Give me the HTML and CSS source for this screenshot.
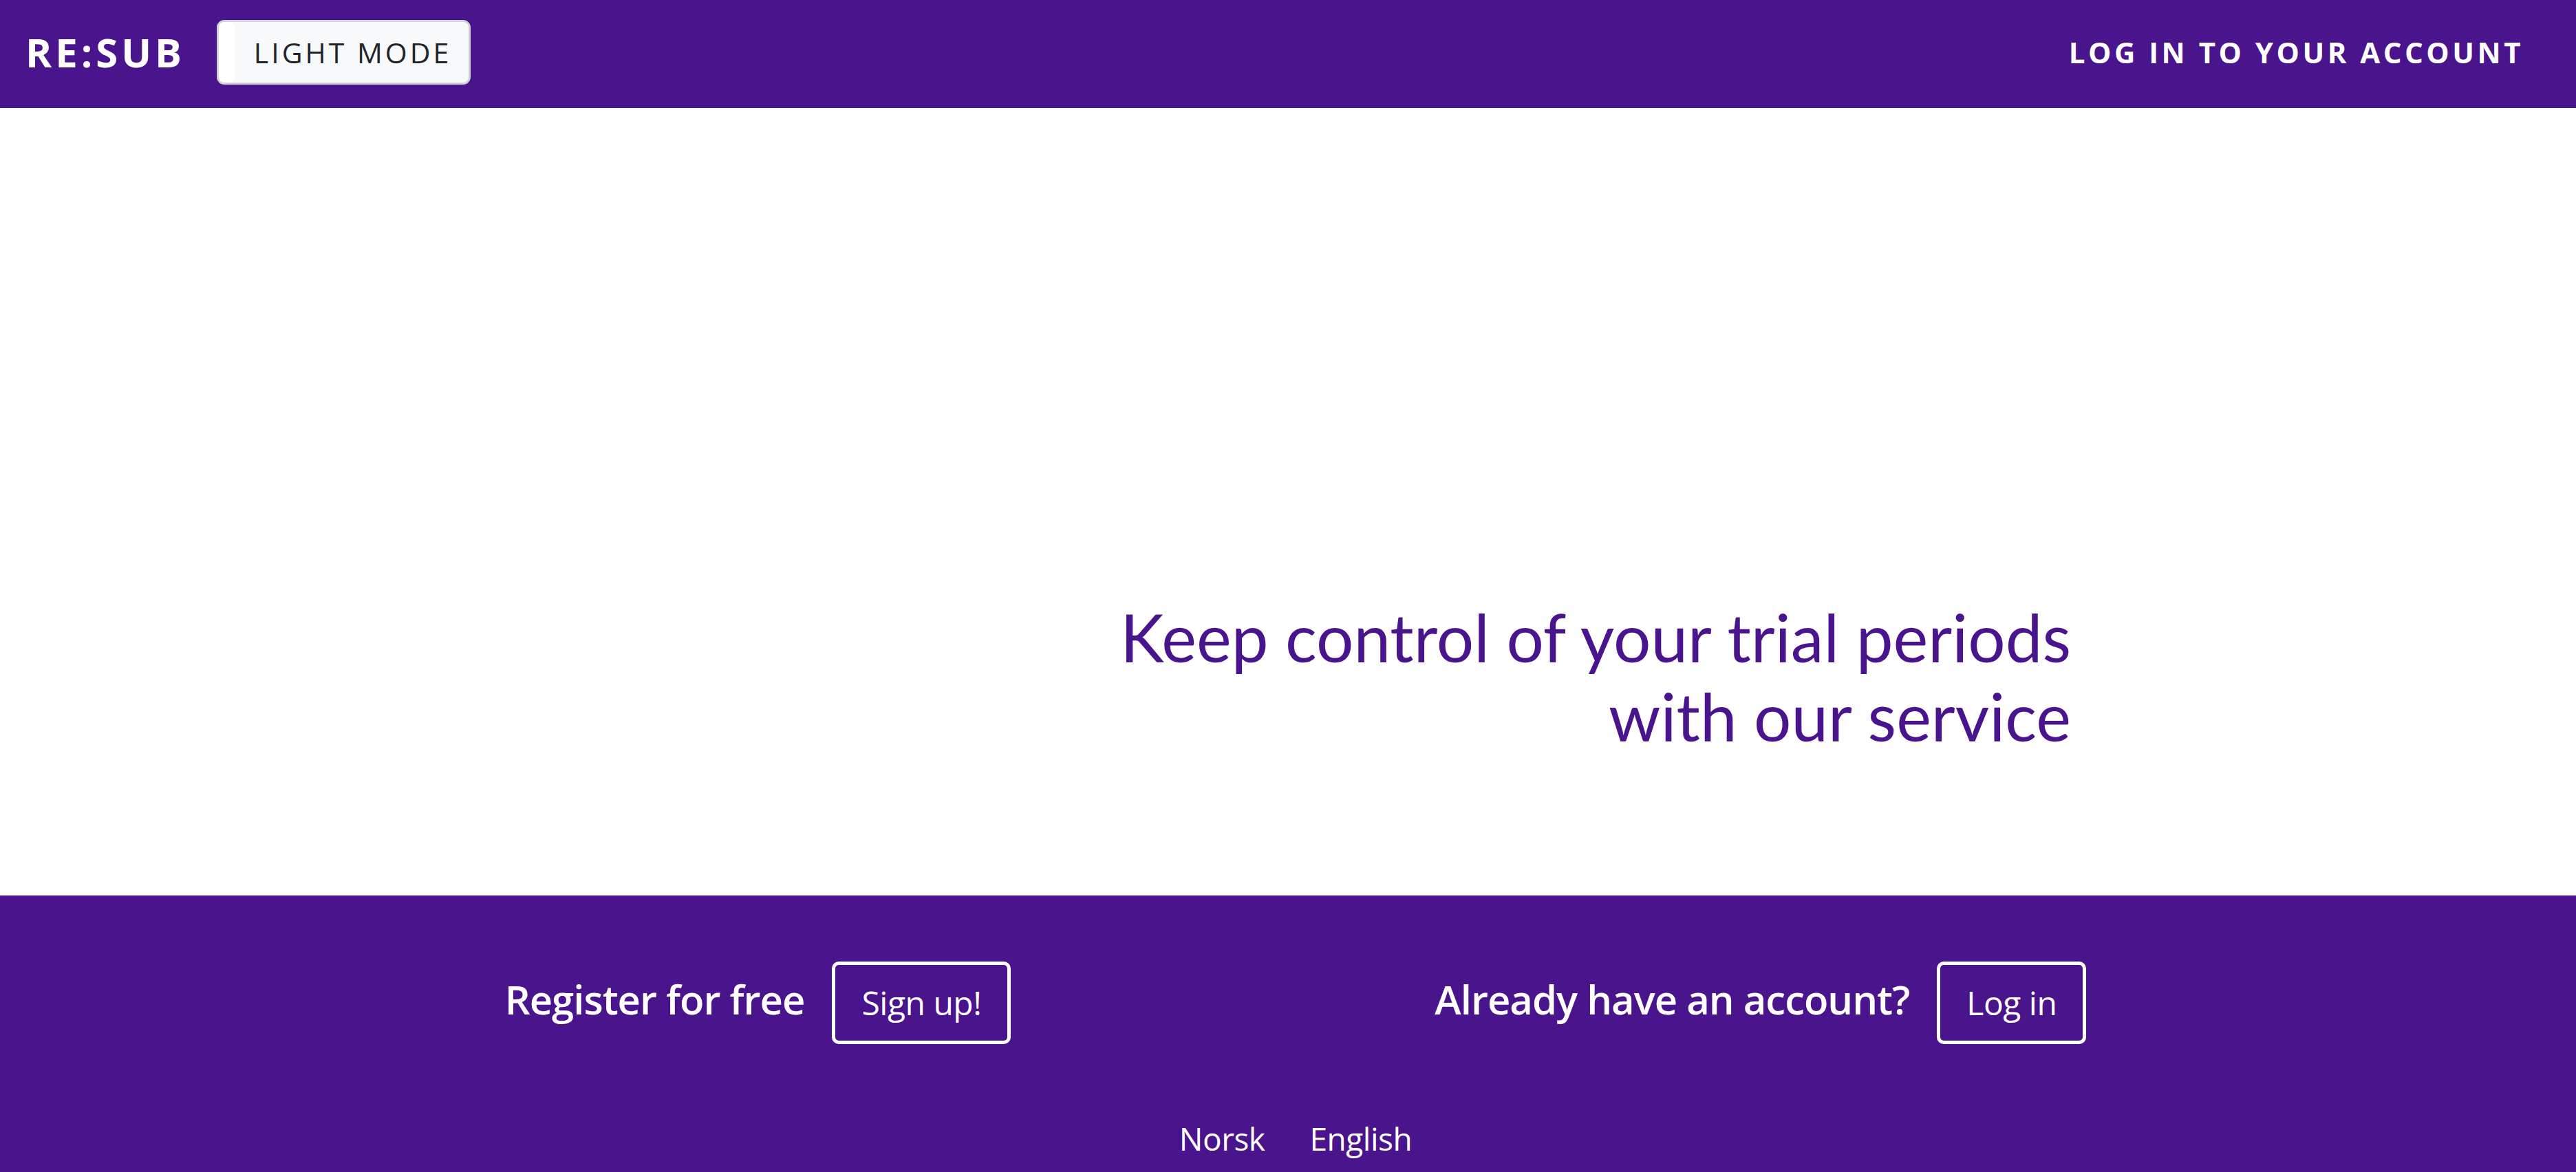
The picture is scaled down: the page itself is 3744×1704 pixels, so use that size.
FILE: index.html
```html
<!DOCTYPE html>
<html lang="en">
<head>
<meta charset="utf-8">
<title>RE:SUB</title>
<link rel="stylesheet" href="styles.css">
</head>
<body>
<header class="topbar">
  <div class="topbar-left">
    <a class="brand" href="#">RE:SUB</a>
    <button class="mode-btn"><span class="mode-knob"></span><span class="mode-label">LIGHT MODE</span></button>
  </div>
  <a class="login-link" href="#">LOG IN TO YOUR ACCOUNT</a>
</header>
<main class="hero">
  <h1 class="hero-title">Keep control of your trial periods<br>with our service</h1>
</main>
<footer class="footer">
  <div class="cta-row">
    <div class="cta">
      <span class="cta-text">Register for free</span>
      <a class="cta-btn" href="#">Sign up!</a>
    </div>
    <div class="cta">
      <span class="cta-text">Already have an account?</span>
      <a class="cta-btn" href="#">Log in</a>
    </div>
  </div>
  <nav class="langs">
    <a href="#">Norsk</a>
    <a href="#">English</a>
  </nav>
</footer>
</body>
</html>
```

FILE: styles.css
```css
* { box-sizing: border-box; }
html, body { margin: 0; padding: 0; }
body {
  font-family: "Open Sans", "Noto Sans", sans-serif;
  background: #ffffff;
  min-height: 1704px;
  display: flex;
  flex-direction: column;
}
a { text-decoration: none; color: inherit; }

.topbar {
  height: 157px;
  background: #4a148c;
  display: flex;
  align-items: center;
  justify-content: space-between;
  padding: 0 76px 6px 37px;
}
.topbar-left {
  display: flex;
  align-items: center;
  gap: 46px;
}
.brand {
  color: #fff;
  font-weight: 700;
  font-size: 58px;
  letter-spacing: 5px;
  line-height: 1;
}
.mode-btn {
  position: relative;
  height: 94px;
  width: 369px;
  background: #f8f9fa;
  border: 3px solid #d3d4d5;
  border-radius: 11px;
  color: #212529;
  font-family: "Open Sans", "Noto Sans", sans-serif;
  font-size: 41px;
  letter-spacing: 4px;
  padding: 0 0 0 26px;
  display: flex;
  align-items: center;
  justify-content: center;
}
.mode-knob {
  position: absolute;
  left: 0;
  top: 0;
  bottom: 0;
  width: 24px;
  background: #ffffff;
  border-radius: 8px;
}
.login-link {
  color: #fff;
  font-weight: 700;
  font-size: 42px;
  letter-spacing: 4.5px;
}

.hero {
  height: 1145px;
  display: flex;
  align-items: flex-end;
  justify-content: flex-end;
  padding: 0 734px 204px 0;
}
.hero-title {
  margin: 0;
  font-family: "Lato", sans-serif;
  font-weight: 400;
  font-size: 96px;
  line-height: 1.2;
  color: #4a148c;
  text-align: right;
}

.footer {
  flex: 1;
  background: #4a148c;
  color: #fff;
  padding: 96px 0 0 22px;
}
.cta-row {
  display: flex;
  justify-content: center;
  gap: 616px;
}
.cta {
  display: flex;
  align-items: center;
  gap: 40px;
}
.cta-text {
  font-size: 58px;
  font-weight: 600;
  letter-spacing: -1px;
  position: relative;
  top: -6px;
}
.cta-btn {
  border: 5px solid #fff;
  border-radius: 10px;
  font-size: 48px;
  line-height: 1.5;
  padding: 19px 38px;
  letter-spacing: -0.5px;
}
.langs {
  display: flex;
  justify-content: center;
  gap: 65px;
  margin-top: 106px;
  font-size: 46px;
  letter-spacing: -0.5px;
}
```
